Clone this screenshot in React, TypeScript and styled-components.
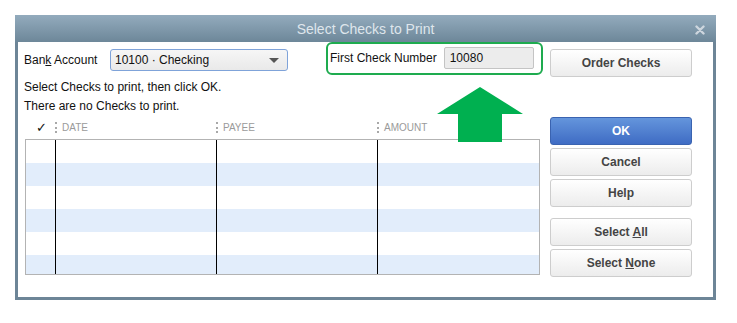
import React from 'react';
import styled, { createGlobalStyle } from 'styled-components';

const GlobalStyle = createGlobalStyle`
    html, body {
        margin: 0;
        padding: 0;
        background: #fff;
        font-family: "Liberation Sans", Arial, sans-serif;
    }
`;

const Page = styled.div`
    width: 737px;
    height: 323px;
    padding: 15px 0 0 15px;
    box-sizing: border-box;
    overflow: hidden;
`;

const Dialog = styled.div`
    width: 701px;
    height: 285px;
    box-sizing: border-box;
    border: 3px solid #6d8597;
    border-top: none;
    display: flex;
    flex-direction: column;
    background: #fff;
    position: relative;
`;

const TitleBar = styled.div`
    height: 27px;
    margin: 0 -3px;
    background: linear-gradient(#93abbd, #6d8799);
    display: flex;
    align-items: center;
    justify-content: center;
    position: relative;
    color: #dfe6ec;
    font-size: 14px;
`;

const CloseIcon = styled.svg`
    position: absolute;
    right: 11px;
    top: 10px;
`;

const Body = styled.div`
    flex: 1;
    display: flex;
    gap: 10px;
    padding: 7px 21px 0 7px;
    position: relative;
`;

const LeftPane = styled.div`
    width: 515px;
    display: flex;
    flex-direction: column;
    font-size: 12px;
    color: #111;
`;

const TopRow = styled.div`
    height: 22px;
    display: flex;
    align-items: center;
`;

const Label = styled.span`
    margin-left: -1px;
    width: 86px;
`;

const SelectBox = styled.div`
    width: 178px;
    height: 22px;
    box-sizing: border-box;
    border: 1px solid #7fa3d9;
    border-radius: 3px;
    background: linear-gradient(#f6f6f6, #e9e9e9);
    display: flex;
    align-items: center;
    justify-content: space-between;
    padding: 0 8px 0 4px;
`;

const Caret = styled.span`
    width: 0;
    height: 0;
    border-left: 5px solid transparent;
    border-right: 5px solid transparent;
    border-top: 5px solid #555;
`;

const FieldGroup = styled.div`
    margin-left: auto;
    margin-right: -3px;
    margin-top: -4px;
    height: 33px;
    width: 217px;
    box-sizing: border-box;
    border: 2px solid #1eab4f;
    border-radius: 6px;
    display: flex;
    align-items: center;
    padding: 0 3px 0 2px;
    gap: 7px;
`;

const NumberInput = styled.div`
    width: 90px;
    height: 22px;
    box-sizing: border-box;
    border: 1px solid #c4c4c4;
    border-radius: 2px;
    background: #ececec;
    display: flex;
    align-items: center;
    padding-left: 5px;
`;

const InfoBlock = styled.div`
    margin-top: 7px;
    margin-left: -1px;
    line-height: 19px;
`;

const HeaderRow = styled.div`
    height: 23px;
    display: grid;
    grid-template-columns: 30px 161px 161px 1fr;
    align-items: center;
    font-size: 10px;
    color: #9a9a9a;
`;

const CheckHead = styled.span`
    color: #111;
    font-size: 13px;
    text-align: center;
    padding-left: 2px;
`;

const HeadCell = styled.span`
    display: flex;
    align-items: center;
    gap: 5px;
    &::before {
        content: '';
        width: 0;
        height: 11px;
        border-left: 2px dotted #a8a8a8;
    }
`;

const Table = styled.div`
    height: 136px;
    box-sizing: border-box;
    border: 1px solid #b3b3b3;
    overflow: hidden;
`;

const Row = styled.div<{ $alt: boolean }>`
    height: 23px;
    display: grid;
    grid-template-columns: 29px 161px 161px 1fr;
    background: ${({ $alt }) => ($alt ? '#e2edfb' : '#fff')};
`;

const Cell = styled.div<{ $line: boolean }>`
    border-left: ${({ $line }) => ($line ? '1px solid #000' : 'none')};
`;

const ButtonColumn = styled.div`
    width: 142px;
    display: flex;
    flex-direction: column;
`;

const Button = styled.div<{ $primary?: boolean; $gap?: number }>`
    height: 28px;
    box-sizing: border-box;
    margin-top: ${({ $gap }) => $gap ?? 3}px;
    border-radius: 3px;
    border: 1px solid ${({ $primary }) => ($primary ? '#3a63b0' : '#cdcdcd')};
    background: ${({ $primary }) =>
        $primary ? 'linear-gradient(#6495dc, #3f6cc4)' : 'linear-gradient(#ffffff, #ececec)'};
    color: ${({ $primary }) => ($primary ? '#fff' : '#444')};
    font-weight: 700;
    font-size: 12px;
    display: flex;
    align-items: center;
    justify-content: center;
`;

const Arrow = styled.svg`
    position: absolute;
    left: 418px;
    top: 45px;
`;

const rows = [0, 1, 2, 3, 4, 5];

export default function App() {
    return (
        <>
            <GlobalStyle />
            <Page>
                <Dialog>
                    <TitleBar>
                        Select Checks to Print
                        <CloseIcon width="10" height="10" viewBox="0 0 10 10">
                            <path d="M1.5 1.5 L8.5 8.5 M8.5 1.5 L1.5 8.5" stroke="#cdd6de" strokeWidth="2.4" strokeLinecap="round" />
                        </CloseIcon>
                    </TitleBar>
                    <Body>
                        <LeftPane>
                            <TopRow>
                                <Label>Ban<u>k</u> Account</Label>
                                <SelectBox>
                                    <span>10100 · Checking</span>
                                    <Caret />
                                </SelectBox>
                                <FieldGroup>
                                    <span>First Check Number</span>
                                    <NumberInput>10080</NumberInput>
                                </FieldGroup>
                            </TopRow>
                            <InfoBlock>
                                <div>Select Checks to print, then click OK.</div>
                                <div>There are no Checks to print.</div>
                            </InfoBlock>
                            <HeaderRow>
                                <CheckHead>✓</CheckHead>
                                <HeadCell>DATE</HeadCell>
                                <HeadCell>PAYEE</HeadCell>
                                <HeadCell>AMOUNT</HeadCell>
                            </HeaderRow>
                            <Table>
                                {rows.map(r => (
                                    <Row key={r} $alt={r % 2 === 1}>
                                        <Cell $line={false} />
                                        <Cell $line />
                                        <Cell $line />
                                        <Cell $line />
                                    </Row>
                                ))}
                            </Table>
                        </LeftPane>
                        <ButtonColumn>
                            <Button $gap={0}><span>Order Checks</span></Button>
                            <Button $primary $gap={40}><span>OK</span></Button>
                            <Button><span>Cancel</span></Button>
                            <Button><span>Help</span></Button>
                            <Button $gap={11}><span>Select <u>A</u>ll</span></Button>
                            <Button><span>Select <u>N</u>one</span></Button>
                        </ButtonColumn>
                        <Arrow width="88" height="55" viewBox="0 0 88 55">
                            <polygon points="44,0 87,27 66,27 66,55 22,55 22,27 1,27" fill="#00b050" />
                        </Arrow>
                    </Body>
                </Dialog>
            </Page>
        </>
    );
}
